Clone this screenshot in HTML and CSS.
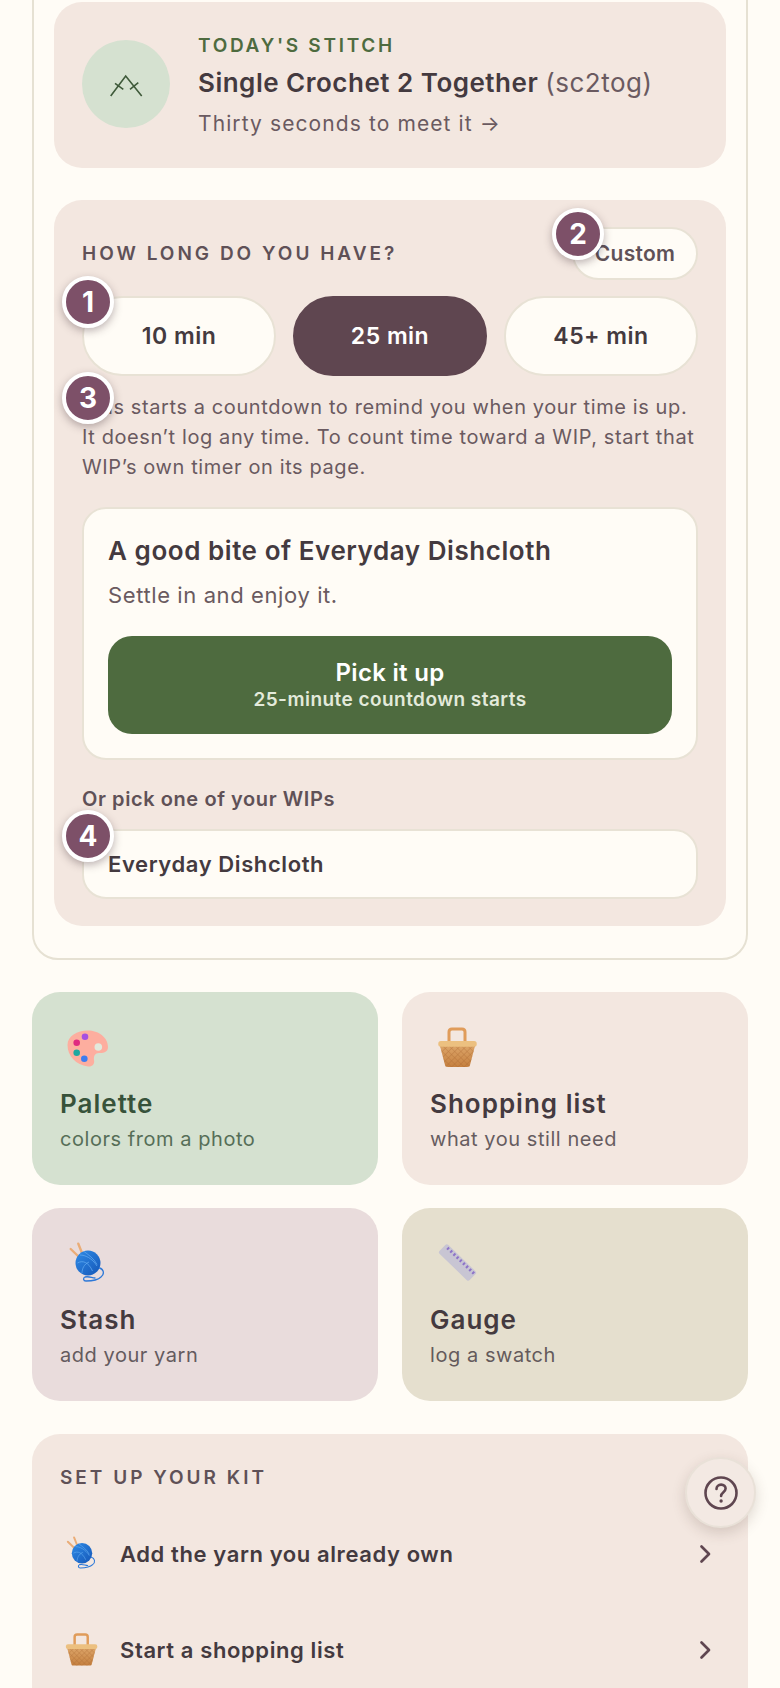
FILE: index.html
```html
<!DOCTYPE html>
<html lang="en">
<head>
    <meta charset="UTF-8">
    <meta name="viewport" content="width=device-width, initial-scale=1.0">
    <title>Today</title>
    <link rel="stylesheet" href="styles.css">
</head>

<body>
    <svg class="defs" width="0" height="0" aria-hidden="true">
        <defs>
            <linearGradient id="yarn-blue" x1="0" y1="0" x2="1" y2="1">
                <stop offset="0" stop-color="#2f8be6"/>
                <stop offset="1" stop-color="#1557b8"/>
            </linearGradient>
            <linearGradient id="basket-body" x1="0" y1="0" x2="0" y2="1">
                <stop offset="0" stop-color="#dca468"/>
                <stop offset="1" stop-color="#c5803f"/>
            </linearGradient>
            <pattern id="weave" width="4.4" height="4.4" patternUnits="userSpaceOnUse" patternTransform="rotate(45)">
                <path d="M0 0H4.400M0 0V4.400" stroke="#a8662e" stroke-width="1" opacity=".6"/>
            </pattern>
            <symbol id="icon-palette" viewBox="0 0 44 44">
                <path d="M22 4.500C32 4.500 42 11 42 21C42 27 36 27 33 27C29 27 27.500 30 28 34C29 38 26 41 22 40.500C10 39 1.500 30 1.500 19C1.500 10 11 4.500 22 4.500Z" fill="#fdae9f"/>
                <circle cx="32.300" cy="21" r="3.800" fill="#e2e9dc"/>
                <circle cx="19" cy="10.700" r="3.300" fill="#a64fe0"/>
                <circle cx="10.700" cy="16.700" r="3.300" fill="#e02a80"/>
                <circle cx="10.700" cy="26.700" r="3.300" fill="#1fa8a0"/>
                <circle cx="18.300" cy="32.700" r="3.300" fill="#3d7df0"/>
            </symbol>
            <symbol id="icon-basket" viewBox="0 0 44 44">
                <path d="M13 16V6c0-2 1-3 3-3h10c2 0 3 1 3 3v10" fill="none" stroke="#e09c5a" stroke-width="3"/>
                <path d="M4 20h35l-5 19c0 1-1 2-3 2H12c-2 0-3-1-3-2z" fill="url(#basket-body)"/>
                <path d="M4 20h35l-5 19c0 1-1 2-3 2H12c-2 0-3-1-3-2z" fill="url(#weave)"/>
                <rect x="2.300" y="15" width="38.400" height="5.800" rx="2.500" fill="#ecc080"/>
            </symbol>
            <symbol id="icon-yarn" viewBox="0 0 44 44">
                <path d="M12 14L4.700 7M16 11L12.300 1.700" stroke="#eaad78" stroke-width="2.400" stroke-linecap="round"/>
                <circle cx="22" cy="21" r="12.500" fill="url(#yarn-blue)"/>
                <path d="M14 13c5 0 12 3 17 11M18 9.500c4 3 10 7 13 13M11.500 21c5-3 11-1 15 8M16 31c0-4 2-9 7-11" fill="none" stroke="#66aef2" stroke-width="1" opacity=".7"/>
                <path d="M33.500 26c4 1 5.500 6 1.500 9-3 3-8 4-15 4-3 0-3-3-1-4 4-1 7 1 10 1" fill="none" stroke="#2c78d8" stroke-width="1.300" stroke-linecap="round"/>
            </symbol>
            <symbol id="icon-ruler" viewBox="0 0 44 44">
                <g transform="rotate(44 21.500 20.500)">
                    <rect x="0.500" y="14.300" width="42" height="12.400" rx="2" fill="#c8c5d3"/>
                    <path d="M5 15.500v3M9.400 15.500v3M13.800 15.500v3M18.200 15.500v3M22.600 15.500v3M27 15.500v3M31.400 15.500v3M35.800 15.500v3M40 15.500v3" stroke="#8d73c8" stroke-width="2"/>
                </g>
            </symbol>
            <symbol id="icon-chevron" viewBox="0 0 24 24">
                <path d="M8.500 4.500L16 12l-7.500 7.500" fill="none" stroke="#5f4650" stroke-width="2.700" stroke-linecap="round" stroke-linejoin="round"/>
            </symbol>
        </defs>
    </svg>

    <div class="page">
        <section class="today">
            <a class="stitch">
                <div class="stitch-mark">
                    <svg width="36" height="28" viewBox="0 0 36 28">
                        <path d="M2.700 26L17.700 6l16 20M7 13.300l8.300 6M30.300 12.700L22 19.300" fill="none" stroke="#3f5a3a" stroke-width="1.600"/>
                    </svg>
                </div>
                <div class="stitch-text">
                    <div class="eyebrow">TODAY'S STITCH</div>
                    <div class="stitch-name">Single Crochet 2 Together <span>(sc2tog)</span></div>
                    <div class="stitch-link">Thirty seconds to meet it →</div>
                </div>
            </a>

            <div class="time">
                <span class="badge badge-1">1</span>
                <span class="badge badge-2">2</span>
                <span class="badge badge-3">3</span>
                <span class="badge badge-4">4</span>

                <div class="time-head">
                    <h2 class="label">HOW LONG DO YOU HAVE?</h2>
                    <button class="custom">Custom</button>
                </div>
                <div class="pills">
                    <button class="pill">10 min</button>
                    <button class="pill active">25 min</button>
                    <button class="pill">45+ min</button>
                </div>
                <p class="note">This starts a countdown to remind you when your time is up. It doesn’t log any time. To count time toward a WIP, start that WIP’s own timer on its page.</p>

                <div class="bite">
                    <h3>A good bite of Everyday Dishcloth</h3>
                    <p>Settle in and enjoy it.</p>
                    <button class="go">
                        <span class="go-main">Pick it up</span>
                        <span class="go-sub">25-minute countdown starts</span>
                    </button>
                </div>

                <div class="or">Or pick one of your WIPs</div>
                <button class="wip">Everyday Dishcloth</button>
            </div>
        </section>

        <section class="tiles">
            <a class="tile green">
                <svg class="tile-icon"><use href="#icon-palette"/></svg>
                <div class="tile-name">Palette</div>
                <div class="tile-sub">colors from a photo</div>
            </a>
            <a class="tile rose">
                <svg class="tile-icon"><use href="#icon-basket"/></svg>
                <div class="tile-name">Shopping list</div>
                <div class="tile-sub">what you still need</div>
            </a>
            <a class="tile mauve">
                <svg class="tile-icon"><use href="#icon-yarn"/></svg>
                <div class="tile-name">Stash</div>
                <div class="tile-sub">add your yarn</div>
            </a>
            <a class="tile khaki">
                <svg class="tile-icon"><use href="#icon-ruler"/></svg>
                <div class="tile-name">Gauge</div>
                <div class="tile-sub">log a swatch</div>
            </a>
        </section>

        <section class="kit">
            <h2 class="label">SET UP YOUR KIT</h2>
            <a class="kit-row">
                <svg class="kit-icon"><use href="#icon-yarn"/></svg>
                <span>Add the yarn you already own</span>
                <svg class="chevron"><use href="#icon-chevron"/></svg>
            </a>
            <a class="kit-row">
                <svg class="kit-icon"><use href="#icon-basket"/></svg>
                <span>Start a shopping list</span>
                <svg class="chevron"><use href="#icon-chevron"/></svg>
            </a>
        </section>
    </div>

    <button class="help" aria-label="Help">
        <svg width="36" height="36" viewBox="0 0 36 36">
            <circle cx="18" cy="18" r="15.500" fill="none" stroke="#5f4650" stroke-width="2.600"/>
            <path d="M13.500 14c0-2.600 2-4.400 4.600-4.400 2.700 0 4.500 1.800 4.500 4 0 3.600-4.500 3.600-4.500 7.400" fill="none" stroke="#5f4650" stroke-width="2.600" stroke-linecap="round"/>
            <circle cx="18.100" cy="26" r="1.700" fill="#5f4650"/>
        </svg>
    </button>
</body>
</html>
```

FILE: styles.css
```css
html, body {
    height: 100%;
    margin: 0;
    padding: 0;
    overflow: hidden;
}

body {
    background-color: #fffcf6;
    color: #443a3f;
    font-family: "Inter", "Noto Sans", sans-serif;
}

button {
    font-family: inherit;
    color: inherit;
    cursor: pointer;
}

h2, h3, p {
    margin: 0;
}

.defs {
    position: absolute;
}

/* the shot is scrolled a little, top of the first card is off screen */
.page {
    display: flex;
    flex-direction: column;
    margin-top: -30px;
    padding: 0 32px;
}

.today {
    display: flex;
    flex-direction: column;
    gap: 32px;
    padding: 30px 20px 32px;
    border: 2px solid #e6e1d3;
    border-radius: 26px;
}

.stitch {
    display: flex;
    align-items: center;
    gap: 28px;
    height: 166px;
    padding: 0 28px;
    box-sizing: border-box;
    background-color: #f3e7e0;
    border-radius: 28px;
}

.stitch-mark {
    display: flex;
    align-items: center;
    justify-content: center;
    width: 88px;
    height: 88px;
    flex: none;
    margin-bottom: 2px;
    border-radius: 50%;
    background-color: #d5e1d0;
}

.stitch-text {
    margin-top: 2px;
}

.eyebrow {
    font-size: 19px;
    font-weight: 600;
    letter-spacing: 2.7px;
    color: #4e6b3f;
    line-height: 24px;
}

.stitch-name {
    margin-top: 9px;
    font-size: 26px;
    font-weight: 600;
    letter-spacing: 0.5px;
    line-height: 32px;
}

.stitch-name span {
    font-weight: 400;
    color: #6a5a60;
}

.stitch-link {
    margin-top: 11px;
    font-size: 21px;
    letter-spacing: 1.1px;
    color: #6a5a60;
    line-height: 28px;
}

.time {
    position: relative;
    padding: 27px 28px 27px;
    background-color: #f3e7e0;
    border-radius: 28px;
}

.badge {
    position: absolute;
    display: flex;
    align-items: center;
    justify-content: center;
    width: 44px;
    height: 44px;
    border: 4px solid #fff;
    border-radius: 50%;
    background-color: #7d5068;
    color: #fff;
    font-size: 28px;
    font-weight: 700;
    box-shadow: 0 3px 8px rgba(60, 40, 50, 0.35);
}

.badge-1 { top: 76px; left: 8px; }
.badge-2 { top: 8px; left: 498px; }
.badge-3 { top: 172px; left: 8px; }
.badge-4 { top: 610px; left: 8px; }

.time-head {
    display: flex;
    align-items: center;
    justify-content: space-between;
}

.label {
    font-size: 19px;
    font-weight: 600;
    letter-spacing: 3px;
    color: #5f5157;
}

.custom {
    width: 126px;
    height: 53px;
    border: 2px solid #e8e2d5;
    border-radius: 27px;
    background-color: #fffcf6;
    font-size: 21px;
    font-weight: 600;
    letter-spacing: 0.3px;
    color: #5f5157;
}

.pills {
    display: grid;
    grid-template-columns: repeat(3, 1fr);
    gap: 17px;
    margin-top: 16px;
}

.pill {
    height: 80px;
    border: 2px solid #e8e2d5;
    border-radius: 40px;
    background-color: #fffcf6;
    font-size: 23px;
    font-weight: 600;
    letter-spacing: 0.5px;
}

.pill.active {
    border-color: #5f4650;
    background-color: #5f4650;
    color: #fff;
}

.note {
    margin-top: 16px;
    font-size: 20px;
    letter-spacing: 0.6px;
    line-height: 30px;
    color: #6a5a60;
}

.bite {
    margin-top: 25px;
    padding: 24px;
    border: 2px solid #e8e2d5;
    border-radius: 24px;
    background-color: #fffcf6;
}

.bite h3 {
    font-size: 26px;
    font-weight: 600;
    letter-spacing: 0.55px;
    line-height: 36px;
}

.bite p {
    margin-top: 9px;
    font-size: 22px;
    letter-spacing: 0.6px;
    line-height: 34px;
    color: #6a5a60;
}

.go {
    display: flex;
    flex-direction: column;
    align-items: center;
    justify-content: center;
    width: 100%;
    height: 98px;
    margin-top: 24px;
    border: none;
    border-radius: 24px;
    background-color: #4e6b3f;
    color: #fff;
}

.go-main {
    font-size: 24px;
    font-weight: 600;
    letter-spacing: 0.3px;
    line-height: 30px;
}

.go-sub {
    font-size: 19px;
    font-weight: 600;
    letter-spacing: 0.45px;
    line-height: 24px;
    color: #e3eadb;
}

.or {
    margin-top: 27px;
    font-size: 20px;
    font-weight: 600;
    letter-spacing: 0.58px;
    line-height: 24px;
    color: #5f5157;
}

.wip {
    display: block;
    width: 100%;
    height: 70px;
    margin-top: 18px;
    padding: 0 24px;
    border: 2px solid #e8e2d5;
    border-radius: 24px;
    background-color: #fffcf6;
    font-size: 22px;
    font-weight: 600;
    letter-spacing: 0.6px;
    text-align: left;
}

.tiles {
    display: grid;
    grid-template-columns: 1fr 1fr;
    column-gap: 24px;
    row-gap: 23px;
    margin-top: 32px;
}

.tile {
    display: block;
    height: 193px;
    padding: 34px 28px 0;
    box-sizing: border-box;
    border-radius: 28px;
}

.tile.green { background-color: #d5e1d0; color: #37523a; }
.tile.rose { background-color: #f3e7e0; }
.tile.mauve { background-color: #e9dcdc; }
.tile.khaki { background-color: #e5dfce; }

.tile-icon {
    display: block;
    width: 44px;
    height: 44px;
    margin-left: 6px;
}

.tile-name {
    margin-top: 16px;
    font-size: 26px;
    font-weight: 600;
    letter-spacing: 1px;
    line-height: 36px;
}

.tile-sub {
    margin-top: 3px;
    font-size: 20px;
    letter-spacing: 0.55px;
    line-height: 28px;
    opacity: 0.8;
}

.kit {
    margin-top: 33px;
    padding: 31px 28px 28px;
    background-color: #f3e7e0;
    border-radius: 28px 28px 0 0;
}

.kit-row {
    display: flex;
    align-items: center;
    height: 96px;
    font-size: 22px;
    font-weight: 600;
    letter-spacing: 0.6px;
}

.kit .label {
    line-height: 26px;
    margin-bottom: 15px;
}

.kit-icon {
    width: 36px;
    height: 36px;
    flex: none;
    margin-left: 4px;
    margin-right: 20px;
}

.chevron {
    width: 24px;
    height: 24px;
    margin-left: auto;
    margin-right: 3px;
}

.help {
    position: fixed;
    left: 685px;
    top: 1457px;
    display: flex;
    align-items: center;
    justify-content: center;
    width: 71px;
    height: 71px;
    padding: 0;
    border: 2px solid #e9e1d8;
    border-radius: 50%;
    background-color: #f3e9e3;
    box-shadow: 0 5px 14px rgba(70, 50, 40, 0.18);
}
```
